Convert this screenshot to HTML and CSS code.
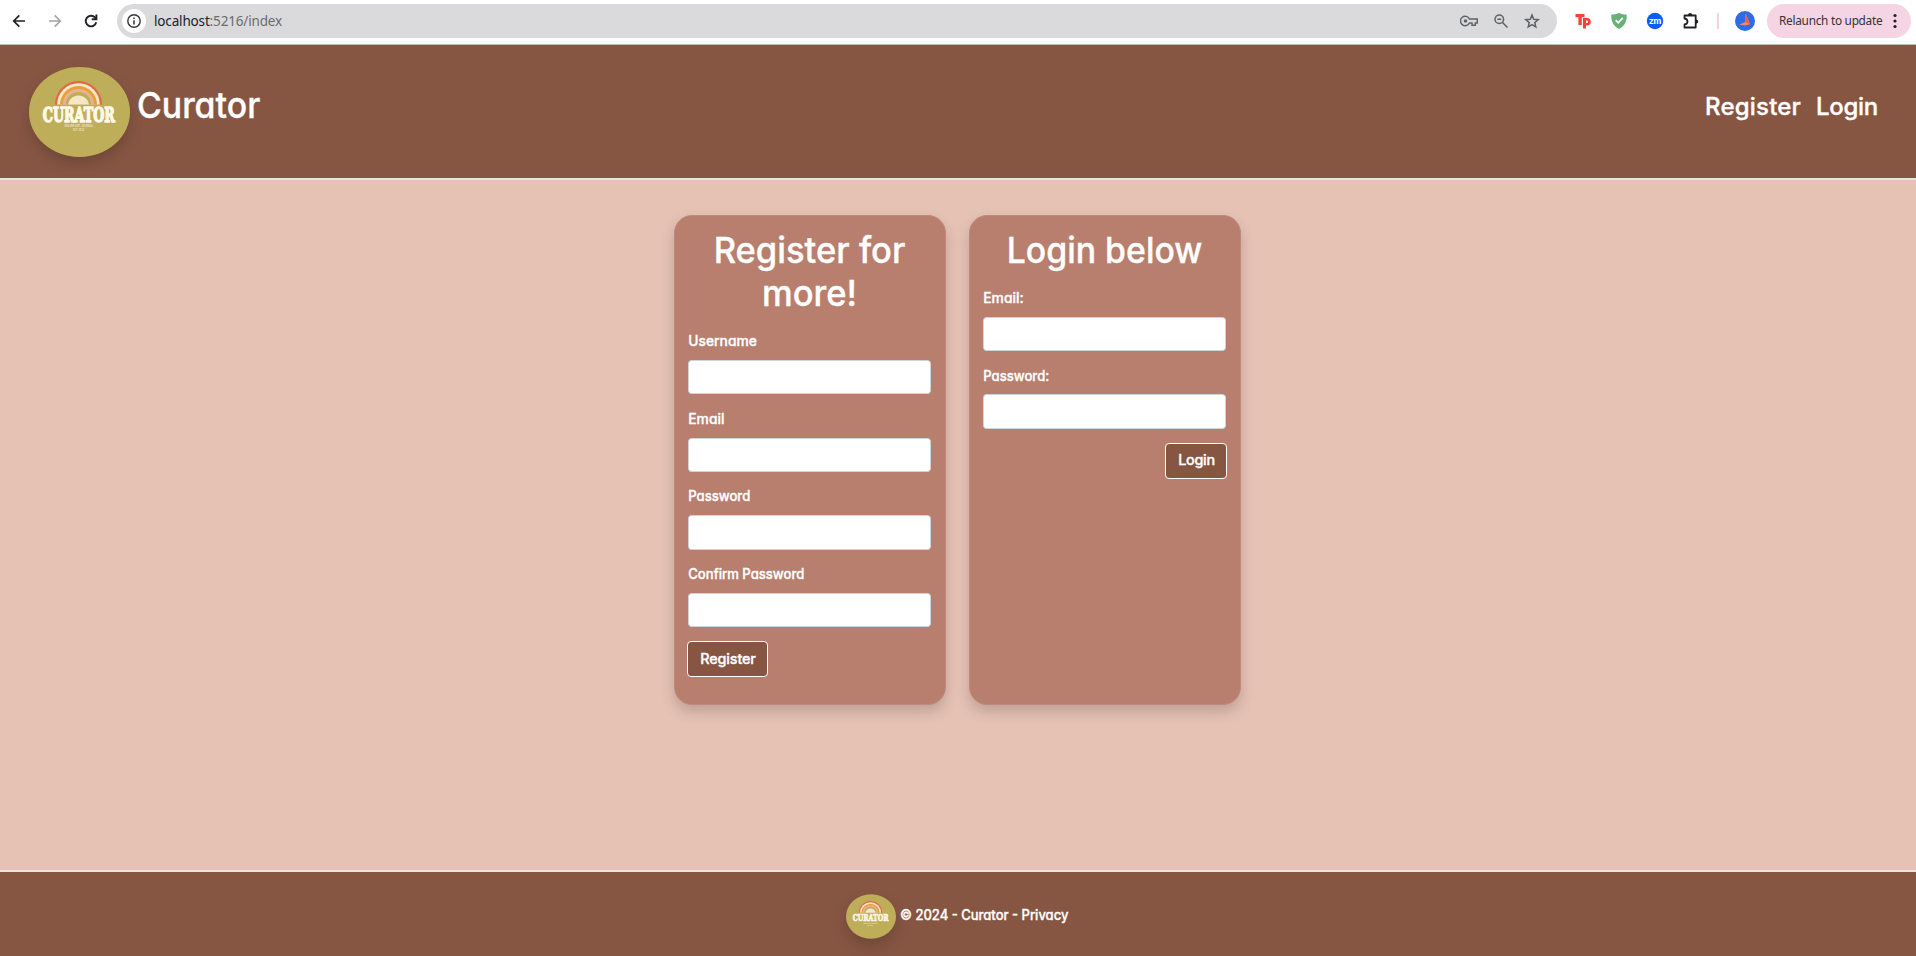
FILE: index.html
```html
<!DOCTYPE html>
<html lang="en">
<head>
<meta charset="utf-8">
<title>Curator</title>
<link rel="stylesheet" href="styles.css">
</head>
<body>
<div class="chrome">
  <div class="nav-icons">
    <svg width="18" height="18" viewBox="0 0 18 18" fill="none" stroke="#202124" stroke-width="1.700"><path d="M15 9H4M9.300 3.400 3.700 9l5.600 5.600"/></svg>
    <svg width="18" height="18" viewBox="0 0 18 18" fill="none" stroke="#a3a4a6" stroke-width="1.700"><path d="M3 9h11M8.700 3.400 14.300 9l-5.600 5.600"/></svg>
    <svg width="18" height="18" viewBox="0 0 18 18" fill="none" stroke="#202124" stroke-width="1.900"><path d="M14.200 10.200A5.300 5.300 0 1 1 13 5.500l1 1.200"/><path d="M14.400 2.600v4.700H9.700"/></svg>
  </div>
  <div class="address">
    <span class="info"><svg width="16" height="16" viewBox="0 0 16 16"><circle cx="8" cy="8" r="6.200" fill="none" stroke="#333" stroke-width="1.400"/><path d="M8 7.200v4.200M8 4.400v1.500" stroke="#333" stroke-width="1.500"/></svg></span>
    <span class="url"><b>localhost</b>:5216/index</span>
    <span class="tools">
      <svg width="18" height="14" viewBox="0 0 18 14" fill="none" stroke="#5f6368" stroke-width="1.500"><path d="M9.400 4.900A4.700 4.700 0 1 0 9.400 9H12v2.300h3.300V9h2V4.900z"/><circle cx="5.500" cy="7" r="1.800" fill="#5f6368" stroke="none"/></svg>
      <svg width="16" height="16" viewBox="0 0 16 16" fill="none" stroke="#5f6368" stroke-width="1.500"><circle cx="6.300" cy="6.300" r="4.300"/><path d="m9.500 9.500 5 5M4.300 6.300h4"/></svg>
      <svg width="16" height="16" viewBox="0 0 16 16" fill="none" stroke="#5f6368" stroke-width="1.500"><path d="m8 2 1.700 4.200 4.500.4-3.400 3 1 4.400L8 11.700 4.200 14l1-4.400-3.400-3 4.500-.4z"/></svg>
    </span>
  </div>
  <div class="extensions">
    <svg width="16" height="16" viewBox="0 0 16 16"><path d="M.5 1h9v3.200H6.800V12H3.400V4.200H.5z" fill="#f6423c"/><path fill-rule="evenodd" d="M8 5h4a3.800 3.800 0 0 1 0 7.600h-1V15.500H8zM11 7.600V10h.9a1.200 1.200 0 0 0 0-2.400z" fill="#f6423c"/></svg>
    <svg width="16" height="18" viewBox="0 0 16 18"><path d="M8 1c2.500 1 5 1.500 7.700 1.600C16 9 14 14 8 17 2 14 0 9 .3 2.600 3 2.500 5.500 2 8 1z" fill="#67b279"/><path d="m4.700 8.200 2.500 2.600 4.600-4.900" fill="none" stroke="#fff" stroke-width="1.700"/></svg>
    <svg width="18" height="18" viewBox="0 0 18 18"><circle cx="9" cy="9" r="8.200" fill="#0b5cff"/><text x="2.900" y="11.800" class="zm" textLength="12.400" lengthAdjust="spacingAndGlyphs">zm</text></svg>
    <svg width="18" height="18" viewBox="0 0 18 18" fill="none" stroke="#202124" stroke-width="1.800" stroke-linejoin="round"><path d="M2.500 3.500h11.200v12H2.500v-3c4-.6 4-5.400 0-6z"/><path d="M6 3.200c0-3 4.200-3 4.200 0zM14 7.400c3 0 3 4.200 0 4.200z" fill="#202124" stroke="none"/></svg>
    <i class="divider"></i>
    <svg width="20" height="20" viewBox="0 0 20 20"><circle cx="10" cy="10" r="10" fill="#2e6be6"/><path d="m10.700 2.500 4.300 10.800-4.800 1.200-5.800-1 6-2.600z" fill="#ff8268"/><path d="m10.700 2.500-.3 8.400L15 13.300z" fill="#e8604f"/></svg>
  </div>
  <div class="relaunch"><span class="relaunch-text">Relaunch to update</span><svg width="4" height="16" viewBox="0 0 4 16" fill="#202124"><circle cx="2" cy="2.500" r="1.600"/><circle cx="2" cy="8" r="1.600"/><circle cx="2" cy="13.500" r="1.600"/></svg></div>
</div>

<header class="header">
  <a class="brand">
    <svg class="logo" viewBox="0 0 101 90">
      <ellipse cx="50.500" cy="45" rx="50.500" ry="45" fill="#beae59"/>
      <path d="M25.900 37.500a23.600 23.600 0 0 1 47.200 0z" fill="#e16b45"/>
      <path d="M28.200 37.500a21.300 21.300 0 0 1 42.600 0z" fill="#f6e8c8"/>
      <path d="M31 37.500a18.500 18.500 0 0 1 37 0z" fill="#e5a13a"/>
      <path d="M33.900 37.500a15.600 15.600 0 0 1 31.200 0z" fill="#e8b196"/>
      <path d="M36.900 37.500a12.600 12.600 0 0 1 25.200 0z" fill="#beae59"/>
      <path d="M39.200 37.500c.6-5.400 5-8.900 10.300-8.900s9.700 3.500 10.300 8.900z" fill="#f3e7c4"/>
      <text x="13.800" y="55" class="logo-name" textLength="72" lengthAdjust="spacingAndGlyphs">CURATOR</text>
      <text x="35.500" y="60" class="logo-small" textLength="29" lengthAdjust="spacingAndGlyphs">ONLINE ART JOURNAL</text>
      <text x="44" y="63.500" class="logo-small" textLength="11" lengthAdjust="spacingAndGlyphs">EST. 2024</text>
    </svg>
    <span class="brand-name">Curator</span>
  </a>
  <nav class="links"><a class="link-register">Register</a><a class="link-login">Login</a></nav>
</header>

<main class="main">
  <section class="card">
    <h1 class="title">Register for more!</h1>
    <label class="label">Username</label><input class="input">
    <label class="label">Email</label><input class="input">
    <label class="label label-tight">Password</label><input class="input">
    <label class="label label-tight">Confirm Password</label><input class="input">
    <button class="button button-register">Register</button>
  </section>
  <section class="card">
    <h1 class="title title-login">Login below</h1>
    <label class="label">Email:</label><input class="input">
    <label class="label label-tight">Password:</label><input class="input">
    <button class="button button-login">Login</button>
  </section>
</main>

<footer class="footer">
  <svg class="logo logo-footer" viewBox="0 0 101 90">
    <ellipse cx="50.500" cy="45" rx="50.500" ry="45" fill="#beae59"/>
    <path d="M25.900 37.500a23.600 23.600 0 0 1 47.200 0z" fill="#e16b45"/>
    <path d="M28.200 37.500a21.300 21.300 0 0 1 42.600 0z" fill="#f6e8c8"/>
    <path d="M31 37.500a18.500 18.500 0 0 1 37 0z" fill="#e5a13a"/>
    <path d="M33.900 37.500a15.600 15.600 0 0 1 31.200 0z" fill="#e8b196"/>
    <path d="M36.900 37.500a12.600 12.600 0 0 1 25.200 0z" fill="#beae59"/>
    <path d="M39.200 37.500c.6-5.400 5-8.900 10.300-8.900s9.700 3.500 10.300 8.900z" fill="#f3e7c4"/>
    <text x="13.800" y="55" class="logo-name" textLength="72" lengthAdjust="spacingAndGlyphs">CURATOR</text>
    <text x="35.500" y="60" class="logo-small" textLength="29" lengthAdjust="spacingAndGlyphs">ONLINE ART JOURNAL</text>
    <text x="44" y="63.500" class="logo-small" textLength="11" lengthAdjust="spacingAndGlyphs">EST. 2024</text>
  </svg>
  <span class="copyright">© 2024 - Curator - Privacy</span>
</footer>
</body>
</html>
```
FILE: styles.css
```css
* { box-sizing: border-box; }
html, body { height: 100%; }
body {
  margin: 0;
  display: flex;
  flex-direction: column;
  background: #e6c2b5;
  color: #fff;
  font: 500 14.4px/21.6px Inter, "Liberation Sans", sans-serif;
  font-feature-settings: "cv11";
  -webkit-text-stroke: .35px #fff;
  overflow: hidden;
}
.chrome {
  height: 45px;
  flex: none;
  display: flex;
  align-items: flex-start;
  background: #fff;
  border-bottom: 1px solid #bdbdbd;
  padding: 4px 5px 0 10px;
  font-family: "Noto Sans", sans-serif;
  font-weight: 400;
  -webkit-text-stroke: 0;
}
.nav-icons { display: flex; gap: 18px; height: 34px; align-items: center; width: 107px; }
.address {
  width: 1440px;
  height: 34px;
  border-radius: 17px;
  background: #dadadc;
  display: flex;
  align-items: center;
  padding: 0 17px 0 5px;
}
.info { width: 24px; height: 24px; border-radius: 50%; background: #fff; display: grid; place-items: center; }
.url { margin: 2px 0 0 8px; color: #6a6c70; font-size: 13.5px; letter-spacing: -.16px; }
.url b { color: #202124; font-weight: 400; }
.tools { margin-left: auto; display: flex; align-items: center; gap: 15px; }
.extensions {
  display: grid;
  grid-template-columns: repeat(4, 36px) 18px 36px;
  place-items: center;
  height: 34px;
  margin-left: 8px;
}
.divider { width: 2px; height: 16px; background: #f5d3e3; }
.zm { font: 700 8.5px Roboto, sans-serif; fill: #fff; }
.relaunch {
  margin-left: auto;
  width: 144px;
  height: 34px;
  border-radius: 17px;
  background: #f5d5e4;
  color: #333;
  display: flex;
  align-items: center;
  padding-left: 12px;
  font-size: 11.8px;
  letter-spacing: -.26px;
}
.relaunch-text { width: 114px; white-space: nowrap; }
.header {
  height: 135px;
  flex: none;
  display: flex;
  justify-content: space-between;
  background: #875643;
  border-bottom: 2px solid #e8e3e3;
  padding: 22px 38px 0 29px;
}
.brand { display: flex; }
.logo {
  width: 101px;
  height: 90px;
  overflow: visible;
  border-radius: 50%;
  box-shadow: 0 7px 14px rgba(0, 0, 0, .17);
  -webkit-text-stroke: 0;
}
.logo-name { font: 700 20px "DejaVu Serif", serif; fill: #fff8e6; stroke: #fff8e6; stroke-width: 1.5; }
.logo-small { font: 500 3px Roboto, sans-serif; fill: #f0e6bd; }
.brand-name {
  font-size: 36px;
  line-height: 44px;
  margin: 16px 0 0 7px;
  transform: scaleX(.94);
  transform-origin: left;
}
.links { display: flex; gap: 15px; font-size: 24px; line-height: 30px; padding-top: 25px; }
.link-register { letter-spacing: .2px; }
.link-login { letter-spacing: -.3px; }
.main { flex: 1; display: flex; justify-content: center; align-items: flex-start; gap: 23px; padding: 35px 2px 0 0; }
.card {
  width: 272px;
  height: 490px;
  display: flex;
  flex-direction: column;
  background: #b87f6e;
  border: 1px solid #c0897a;
  border-radius: 18px;
  padding: 14.4px 13.5px 0;
  box-shadow: 0 7px 14px rgba(0, 0, 0, .17);
}
.title {
  font-size: 36px;
  line-height: 43.2px;
  font-weight: 500;
  text-align: center;
  margin: -1.4px 0 15.8px;
  transform: scaleX(.96);
}
.title-login { transform: scaleX(.94); }
.label {
  margin: -1px 0 8.2px;
  padding-left: .3px;
  height: 21.6px;
  transform: scaleX(.96);
  transform-origin: left;
}
.label-tight { transform: scaleX(.91); }
.input { height: 34.4px; width: 100%; border: 1px solid #ced4da; border-radius: 3.6px; background: #fff; margin: 0 0 14.4px; }
.button {
  height: 36.4px;
  padding: 0 0 1px 1px;
  margin: -.6px -1px 0;
  border: 1px solid #fff;
  border-radius: 4px;
  background: #875643;
  color: #fff;
  font: inherit;
  font-feature-settings: "cv11";
  -webkit-text-stroke: inherit;
}
.button-register { width: 81px; align-self: flex-start; letter-spacing: -.15px; }
.button-login { width: 62px; align-self: flex-end; letter-spacing: -.3px; }
.footer {
  height: 86px;
  flex: none;
  display: flex;
  background: #875643;
  border-top: 2px solid #e8e3e3;
  padding: 22px 0 0 846px;
}
.logo-footer { width: 50px; height: 45px; }
.copyright { margin: 10px 0 0 4px; white-space: nowrap; transform: scaleX(.905); transform-origin: left; }
```
